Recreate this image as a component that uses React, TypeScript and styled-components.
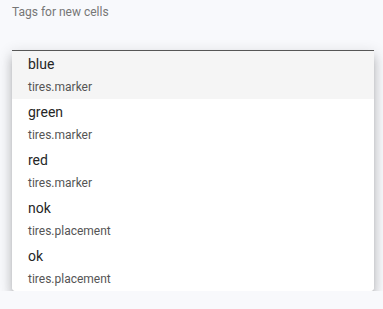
import styled, { createGlobalStyle } from "styled-components";

const GlobalStyle = createGlobalStyle`
  html, body {
    margin: 0;
    padding: 0;
    background: #f8f9fc;
    font-family: Roboto, "Liberation Sans", sans-serif;
  }
`;

const Page = styled.div`
  padding: 4px 9px 0 12px;
`;
const Field = styled.div`
  display: flex;
  flex-direction: column;
`;
const Label = styled.label`
  font-size: 12px;
  line-height: 16px;
  color: #767676;
  height: 46px;
`;
const Underline = styled.div`
  height: 1px;
  background: #5c5c5c;
`;
const Menu = styled.ul`
  list-style: none;
  margin: 0;
  padding: 0;
  background: #fff;
  border-radius: 0 0 4px 4px;
  box-shadow: 0 5px 5px -3px rgba(0, 0, 0, 0.2), 0 8px 10px 1px rgba(0, 0, 0, 0.14),
    0 3px 14px 2px rgba(0, 0, 0, 0.12);
  overflow: hidden;
`;
const Item = styled.li<{ $active?: boolean }>`
  height: 48px;
  box-sizing: border-box;
  padding: 3px 16px 0;
  background: ${(p) => (p.$active ? "#f5f5f5" : "#fff")};
`;
const Title = styled.div`
  font-size: 14px;
  line-height: 20px;
  color: #262626;
`;
const Sub = styled.div`
  margin-top: 3px;
  font-size: 12px;
  line-height: 20px;
  color: #555;
`;

const tags = [
  { name: "blue", group: "tires.marker" },
  { name: "green", group: "tires.marker" },
  { name: "red", group: "tires.marker" },
  { name: "nok", group: "tires.placement" },
  { name: "ok", group: "tires.placement" },
];

export default function App() {
  return (
    <>
      <GlobalStyle />
      <Page>
        <Field>
          <Label>Tags for new cells</Label>
          <Underline />
          <Menu>
            {tags.map((t, i) => (
              <Item key={t.name} $active={i === 0}>
                <Title>{t.name}</Title>
                <Sub>{t.group}</Sub>
              </Item>
            ))}
          </Menu>
        </Field>
      </Page>
    </>
  );
}
